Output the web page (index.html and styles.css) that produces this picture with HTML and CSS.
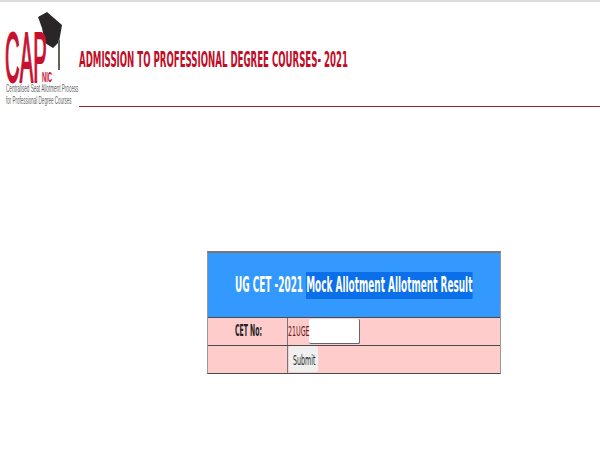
FILE: index.html
```html
<!DOCTYPE html>
<html lang="en">
<head>
<meta charset="utf-8">
<title>UG CET 2021</title>
<link rel="stylesheet" href="styles.css">
</head>
<body>
<div class="topbar"></div>
<header class="header">
  <svg class="logo" width="79" height="96" viewBox="0 0 79 96" aria-label="CAP NIC logo">
    <path d="M38 7 L47 2 L62 15 L59 32 L53 38 L45 33 L42 18 Z" fill="#2a2526"/>
    <path d="M58 30 L60 30 L60 60 L58 60 Z" fill="#5f6458"/>
    <text class="logo-cap" transform="translate(5 72) scale(0.29 1)">CAP</text>
    <text class="logo-nic" transform="translate(42 72) scale(0.42 1)">NIC</text>
    <text class="logo-small" transform="translate(6 82) scale(0.44 1)">Centralised Seat Allotment Process</text>
    <text class="logo-small" transform="translate(6 94) scale(0.43 1)">for Professional Degree Courses</text>
  </svg>
  <div class="title-wrap">
    <h1 class="title">ADMISSION TO PROFESSIONAL DEGREE COURSES- 2021</h1>
  </div>
</header>
<main class="main">
  <form class="panel">
    <div class="panel-head"><span class="head-text">UG CET -2021 <mark class="hl">Mock Allotment Allotment Result</mark></span></div>
    <div class="row">
      <div class="label"><span class="label-text">CET No:</span></div>
      <div class="field"><span class="prefix">21UGE</span><span class="input"></span></div>
    </div>
    <div class="row">
      <div class="label"></div>
      <div class="field"><span class="button"><span class="button-text">Submit</span></span></div>
    </div>
  </form>
</main>
</body>
</html>
```
FILE: styles.css
```css
html, body { margin: 0; padding: 0; background: #fff; }
body { width: 600px; height: 450px; overflow: hidden; font-family: "DejaVu Sans", sans-serif; }
.topbar { height: 2px; background: #dcdcdc; }
.header { display: flex; height: 105px; }
.logo { flex: none; margin-top: 8px; display: block; }
.logo-cap { font: 400 70px "Liberation Sans", sans-serif; fill: #c8102e; stroke: #c8102e; stroke-width: 2px; }
.logo-nic { font: 700 14px "Liberation Sans", sans-serif; fill: #c8102e; }
.logo-small { font: 400 10.5px "Liberation Sans", sans-serif; fill: #666; }
.title-wrap { flex: 1; min-width: 0; border-bottom: 1px solid #a5202e; box-sizing: border-box; position: relative; }
.title { position: absolute; left: 0; top: 47px; margin: 0; font: 700 21px/22px "DejaVu Sans", sans-serif; color: #c00d28; white-space: nowrap; transform: scaleX(0.41); transform-origin: left center; }
.main { padding: 144px 0 0 207px; }
.panel { width: 294px; border: 1px solid #999; border-top: 2px solid #777; border-bottom: 1px solid #4a4a4a; box-sizing: border-box; background: #ffcccc; }
.panel-head { height: 64px; background: #3399ff; position: relative; }
.head-text { position: absolute; left: 27px; top: 19px; color: #fff; font-weight: 700; font-size: 21px; line-height: 27px; white-space: nowrap; transform: scaleX(0.425); transform-origin: left center; }
.hl { background: #0a6fe8; color: #fff; display: inline-block; }
.row { display: flex; height: 28px; border-top: 1px solid #4a4a4a; box-sizing: border-box; }
.label { width: 80px; border-right: 1px solid #777; box-sizing: border-box; position: relative; }
.label-text { position: absolute; left: 27px; top: 4px; font-weight: 700; font-size: 15px; line-height: 19px; color: #222; white-space: nowrap; transform: scaleX(0.41); transform-origin: left center; }
.field { flex: 1; display: flex; align-items: flex-start; position: relative; padding-left: 21px; }
.prefix { position: absolute; left: 0; top: 4px; font-size: 14px; line-height: 19px; color: #6b2020; transform: scaleX(0.45); transform-origin: left center; white-space: nowrap; }
.input { width: 50px; height: 24px; margin-top: 1px; background: #fff; border-right: 1px solid #666; border-bottom: 1px solid #666; border-radius: 2px; }
.button { position: absolute; left: 1px; top: 0; width: 29px; height: 26px; background: #f0f0f0; border-radius: 2px; }
.button-text { position: absolute; left: 4px; top: 5px; font-size: 14px; line-height: 19px; color: #222; white-space: nowrap; transform: scaleX(0.45); transform-origin: left center; }
```
